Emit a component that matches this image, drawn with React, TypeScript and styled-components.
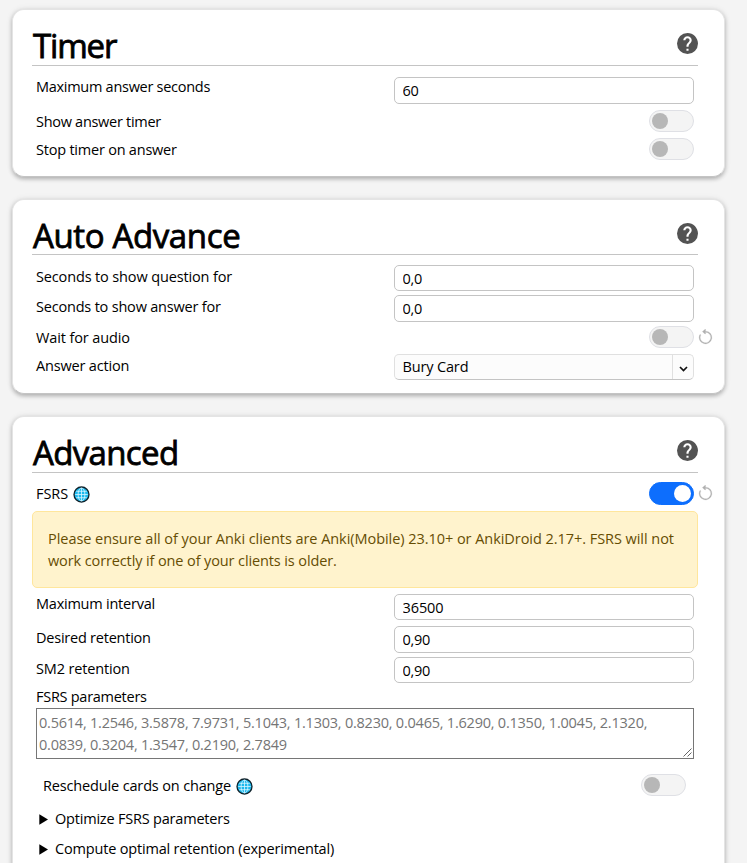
import React from "react";
import styled, { createGlobalStyle } from "styled-components";

const GlobalStyle = createGlobalStyle`
  * { box-sizing: border-box; }
  html, body { margin: 0; background: #f4f4f4; }
  body {
    height: 863px;
    overflow: hidden;
    color: #000;
    font-family: "Open Sans", "Noto Sans", sans-serif;
    font-size: 14.5px;
    line-height: 20px;
  }
`;

const Page = styled.main`
  display: flex;
  flex-direction: column;
  gap: 22px;
  width: 747px;
  height: 863px;
  overflow: hidden;
  padding: 9px 22px 0 12px;
`;

const Card = styled.section<{ $height: number }>`
  flex: none;
  height: ${(p) => p.$height}px;
  padding: 0 12px 0 19px;
  background: #fff;
  border: 1px solid #e4e4e4;
  border-bottom-color: #c4c4c4;
  border-radius: 12px;
  box-shadow: 0 2px 4px rgba(0, 0, 0, 0.26), 0 0 7px rgba(0, 0, 0, 0.07);
`;

const Header = styled.header<{ $height: number }>`
  display: flex;
  justify-content: space-between;
  align-items: flex-start;
  width: 666px;
  height: ${(p) => p.$height}px;
  border-bottom: 1px solid #c4c4c4;
`;

const Title = styled.h1<{ $track: number }>`
  margin: 14px 0 0 1px;
  font-size: 33px;
  font-weight: 400;
  line-height: 44px;
  white-space: nowrap;
  letter-spacing: ${(p) => p.$track}px;
  -webkit-text-stroke: 0.8px #000;
`;

const HelpSvg = styled.svg`
  width: 21px;
  height: 21px;
  margin-top: 23px;
  fill: #535353;
`;

const Row = styled.div<{ $height: number }>`
  display: grid;
  grid-template-columns: 358px 300px 18px;
  align-items: start;
  height: ${(p) => p.$height}px;
  padding-left: 4px;
`;

const Label = styled.span<{ $top?: number; $track?: number; $indent?: number }>`
  display: flex;
  align-items: center;
  padding-top: ${(p) => p.$top ?? 4}px;
  padding-left: ${(p) => p.$indent ?? 0}px;
  letter-spacing: ${(p) => p.$track ?? -0.15}px;
  white-space: nowrap;
`;

const Field = styled.input<{
  $top?: number;
  $height?: number;
  $track?: number;
  $drop?: number;
}>`
  width: 300px;
  height: ${(p) => p.$height ?? 26}px;
  margin: ${(p) => p.$top ?? 2}px 0 0;
  padding: ${(p) => p.$drop ?? 0}px 8px ${(p) => ((p.$height ?? 26) === 27 ? 1 : 0)}px 7.5px;
  border: 1px solid #c4c4c4;
  border-radius: 5px;
  background: #fff;
  color: #000;
  font: inherit;
  letter-spacing: ${(p) => p.$track ?? -0.25}px;
  outline: none;
`;

const Switch = styled.span<{ $on?: boolean; $top?: number; $right?: number }>`
  display: flex;
  align-items: center;
  justify-self: end;
  justify-content: ${(p) => (p.$on ? "flex-end" : "flex-start")};
  width: 45px;
  height: ${(p) => (p.$on ? 23 : 22)}px;
  margin-top: ${(p) => p.$top ?? 2}px;
  margin-right: ${(p) => p.$right ?? 0}px;
  padding: 0 2px;
  border: 1px solid ${(p) => (p.$on ? "#0d6efd" : "#dfe0e5")};
  border-radius: 12px;
  background: ${(p) => (p.$on ? "#0d6efd" : "#f4f4f4")};
  &::before {
    content: "";
    width: ${(p) => (p.$on ? 17 : 16)}px;
    height: ${(p) => (p.$on ? 17 : 16)}px;
    border-radius: 50%;
    background: ${(p) => (p.$on ? "#fff" : "#b7b7b7")};
  }
`;

const RevertSvg = styled.svg<{ $top: number }>`
  width: 17px;
  height: 17px;
  margin: ${(p) => p.$top}px 0 0 3px;
  fill: #b0b0b0;
  stroke: #b0b0b0;
  stroke-width: 0.25;
`;

const Select = styled.div`
  display: flex;
  width: 300px;
  height: 26px;
  margin-top: 2px;
  border: 1px solid #e0e0e0;
  border-bottom-color: #c4c4c4;
  border-radius: 5px;
  background: #fcfcfc;
`;

const SelectValue = styled.span`
  flex: 1;
  padding: 2px 8px 0 7.5px;
  letter-spacing: -0.15px;
`;

const SelectArrow = styled.span`
  display: flex;
  align-items: center;
  justify-content: center;
  width: 21px;
  padding-top: 4px;
  border-left: 1px solid #e0e0e0;
  svg { width: 9px; height: 6px; }
`;

const Alert = styled.div`
  width: 666px;
  height: 77px;
  padding: 16px 0 0 15px;
  border: 1px solid #ffe69c;
  border-radius: 5px;
  background: #fff3cd;
  color: #664d03;
  line-height: 22px;
`;

const AlertLine = styled.div<{ $track: number }>`
  white-space: nowrap;
  letter-spacing: ${(p) => p.$track}px;
`;

const Parameters = styled.div`
  display: flex;
  width: 658px;
  height: 51px;
  margin-left: 4px;
  padding: 3px 1px 1px 2px;
  border: 1px solid #767676;
  color: #757575;
  line-height: 22px;
  letter-spacing: -0.225px;
  white-space: nowrap;
`;

const ParameterText = styled.div`
  flex: 1;
`;

const Grip = styled.svg`
  align-self: flex-end;
  width: 9px;
  height: 9px;
`;

const GlobeSvg = styled.svg`
  width: 17px;
  height: 17px;
  margin-left: 5px;
`;

const Disclosure = styled.div<{ $track: number }>`
  display: flex;
  align-items: center;
  gap: 7px;
  height: 30px;
  padding-left: 7px;
  letter-spacing: ${(p) => p.$track}px;
  white-space: nowrap;
  svg { width: 9px; height: 11px; }
`;

const Help = () => (
  <HelpSvg viewBox="2 2 20 20">
    <path d="M15.07 11.25L14.17 12.17C13.45 12.89 13 13.5 13 15H11V14.5C11 13.39 11.45 12.39 12.17 11.67L13.41 10.41C13.78 10.05 14 9.55 14 9C14 7.89 13.1 7 12 7A2 2 0 0 0 10 9H8A4 4 0 0 1 12 5A4 4 0 0 1 16 9C16 9.88 15.64 10.67 15.07 11.25M13 19H11V17H13M12 2A10 10 0 0 0 2 12A10 10 0 0 0 12 22A10 10 0 0 0 22 12C22 6.47 17.5 2 12 2Z" />
  </HelpSvg>
);

const Revert = ({ top }: { top: number }) => (
  <RevertSvg viewBox="0 0 16 16" $top={top}>
    <path d="M8 3a5 5 0 1 1-4.546 2.914.5.5 0 0 0-.908-.417A6 6 0 1 0 8 2v1z" />
    <path d="M8 4.466V.534a.25.25 0 0 0-.41-.192L5.23 2.308a.25.25 0 0 0 0 .384l2.36 1.966A.25.25 0 0 0 8 4.466z" />
  </RevertSvg>
);

const Globe = () => (
  <GlobeSvg viewBox="0 0 17 17" fill="none">
    <circle cx="8.5" cy="8.5" r="7.5" fill="#1cb9ee" stroke="#10222b" strokeWidth="1.3" />
    <g stroke="#d9f5ff" strokeWidth="0.8">
      <path d="M8.5 2v13M2.2 8.5h12.6M3.2 5.3h10.6M3.2 11.7h10.6" />
      <ellipse cx="8.5" cy="8.5" rx="3.4" ry="6.5" />
    </g>
  </GlobeSvg>
);

const Triangle = () => (
  <svg viewBox="0 0 9 11">
    <path d="M0.3 0.3L9 5.5L0.3 10.7Z" />
  </svg>
);

export default function App() {
  return (
    <>
      <GlobalStyle />
      <Page>
        <Card $height={168}>
          <Header $height={56}>
            <Title $track={-1.15}>Timer</Title>
            <Help />
          </Header>
          <Row $height={42}>
            <Label $top={11} $track={-0.28}>Maximum answer seconds</Label>
            <Field $top={11} $height={27} defaultValue="60" />
          </Row>
          <Row $height={28}>
            <Label $track={-0.29}>Show answer timer</Label>
            <Switch />
          </Row>
          <Row $height={28}>
            <Label $track={-0.22}>Stop timer on answer</Label>
            <Switch />
          </Row>
        </Card>

        <Card $height={195}>
          <Header $height={55}>
            <Title $track={-0.37}>Auto Advance</Title>
            <Help />
          </Header>
          <Row $height={38}>
            <Label $top={12} $track={-0.14}>Seconds to show question for</Label>
            <Field $top={10} defaultValue="0,0" />
          </Row>
          <Row $height={31}>
            <Label $track={-0.197}>Seconds to show answer for</Label>
            <Field $height={27} defaultValue="0,0" />
          </Row>
          <Row $height={28}>
            <Label $track={-0.12}>Wait for audio</Label>
            <Switch />
            <Revert top={5} />
          </Row>
          <Row $height={28}>
            <Label $track={-0.18}>Answer action</Label>
            <Select>
              <SelectValue>Bury Card</SelectValue>
              <SelectArrow>
                <svg viewBox="0 0 9 6" fill="none">
                  <path d="M1 1l3.5 3.5L8 1" stroke="#111" strokeWidth="1.7" />
                </svg>
              </SelectArrow>
            </Select>
          </Row>
        </Card>

        <Card $height={480}>
          <Header $height={56}>
            <Title $track={-0.65}>Advanced</Title>
            <Help />
          </Header>
          <Row $height={38}>
            <Label $top={11} $track={-0.05}>
              FSRS
              <Globe />
            </Label>
            <Switch $on $top={9} />
            <Revert top={12} />
          </Row>
          <Alert>
            <AlertLine $track={-0.05}>
              Please ensure all of your Anki clients are Anki(Mobile) 23.10+ or AnkiDroid 2.17+. FSRS will not
            </AlertLine>
            <AlertLine $track={-0.115}>work correctly if one of your clients is older.</AlertLine>
          </Alert>
          <Row $height={36}>
            <Label $top={6} $track={-0.23}>Maximum interval</Label>
            <Field $top={6} $track={-0.1} $drop={1} defaultValue="36500" />
          </Row>
          <Row $height={31}>
            <Label $track={-0.23}>Desired retention</Label>
            <Field $height={27} defaultValue="0,90" />
          </Row>
          <Row $height={28}>
            <Label $track={-0.15}>SM2 retention</Label>
            <Field $drop={1} defaultValue="0,90" />
          </Row>
          <Row $height={25}>
            <Label $track={-0.27}>FSRS parameters</Label>
          </Row>
          <Parameters>
            <ParameterText>
              0.5614, 1.2546, 3.5878, 7.9731, 5.1043, 1.1303, 0.8230, 0.0465, 1.6290, 0.1350, 1.0045, 2.1320,
              <br />
              0.0839, 0.3204, 1.3547, 0.2190, 2.7849
            </ParameterText>
            <Grip viewBox="0 0 9 9">
              <path d="M0.5 8.5L8.5 0.5M4.5 8.5L8.5 4.5" stroke="#555" strokeWidth="0.9" />
            </Grip>
          </Parameters>
          <Row $height={45}>
            <Label $top={17} $track={-0.15} $indent={7}>
              Reschedule cards on change
              <Globe />
            </Label>
            <Switch $top={15} $right={8} />
          </Row>
          <Disclosure $track={-0.199}>
            <Triangle />
            Optimize FSRS parameters
          </Disclosure>
          <Disclosure $track={-0.177}>
            <Triangle />
            Compute optimal retention (experimental)
          </Disclosure>
        </Card>
      </Page>
    </>
  );
}
